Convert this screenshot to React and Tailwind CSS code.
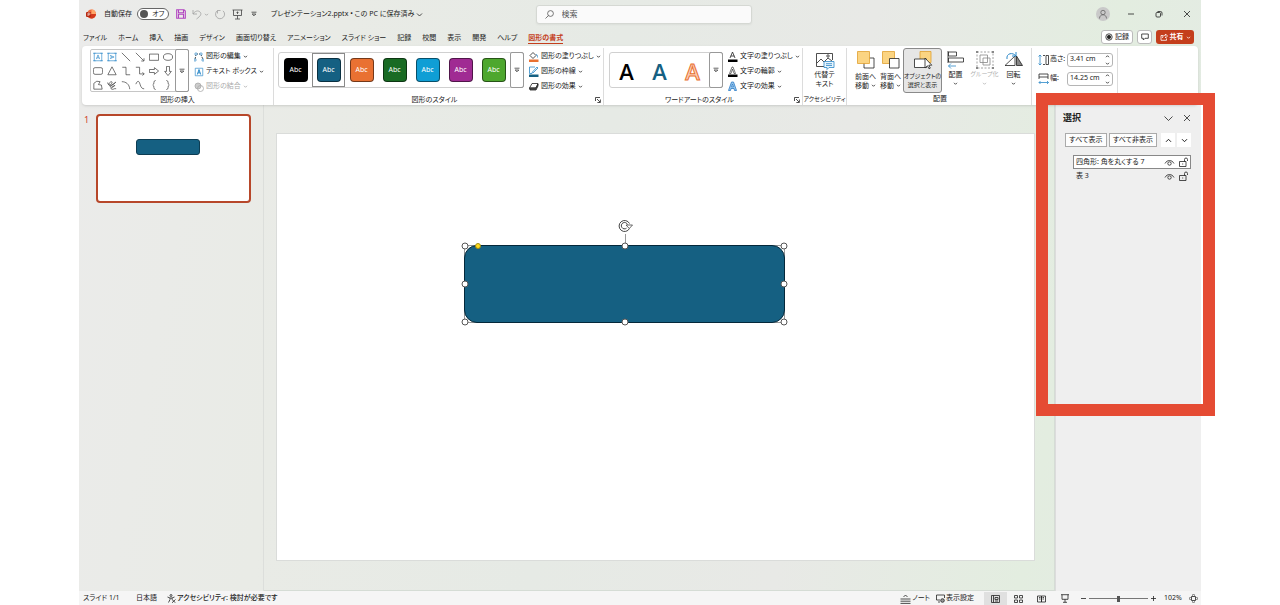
import { useState } from "react";

const tabs = [
  "ファイル", "ホーム", "挿入", "描画", "デザイン", "画面切り替え", "アニメーション",
  "スライド ショー", "記録", "校閲", "表示", "開発", "ヘルプ", "図形の書式",
];

const swatches = ["bg-black", "bg-[#156082]", "bg-[#e97132]", "bg-[#196b24]", "bg-[#0f9ed5]", "bg-[#a02b93]", "bg-[#4ea72e]"];

const handles = [
  "left-0 top-0", "left-1/2 top-0", "left-full top-0", "left-0 top-1/2",
  "left-full top-1/2", "left-0 top-full", "left-1/2 top-full", "left-full top-full",
];

function Svg({ w = 12, h = 12, box, className = "", children }) {
  return (
    <svg
      width={w}
      height={h}
      viewBox={box || `0 0 ${w} ${h}`}
      fill="none"
      stroke="currentColor"
      strokeWidth="0.8"
      className={`shrink-0 ${className}`}
      aria-hidden="true"
    >
      {children}
    </svg>
  );
}

function Chevron({ className = "" }) {
  return (
    <Svg w={5} h={5} className={className}>
      <path d="M1 1.8 2.5 3.3 4 1.8" />
    </Svg>
  );
}

function MoveChevron({ className = "" }) {
  return (
    <Svg w={7} h={7} className={className}>
      <path d="M1 2.2 3.5 4.7 6 2.2" strokeWidth="1" />
    </Svg>
  );
}

function MoreArrow() {
  return (
    <Svg w={6} h={6}>
      <path d="M.5 1.2h5M1.2 3 3 4.8 4.8 3z" strokeWidth=".7" />
    </Svg>
  );
}

function Launcher() {
  return (
    <button aria-label="詳細" className="absolute right-0.5 bottom-0.5">
      <Svg w={6} h={6}>
        <path d="M.5 4V.5H5M2 2l3 3M5.4 2.5v3h-3" />
      </Svg>
    </button>
  );
}

const blue = "#2b88c8";

const shapes = [
  { name: "テキスト ボックス", d: <g stroke={blue}><path d="M1.5 1.5h9v9h-9zM4 8.5 6 3.5l2 5M4.7 7h2.6" /><path d="M0 1.5h3M9 1.5h3M0 10.5h3M9 10.5h3" /></g> },
  { name: "縦書きテキスト ボックス", d: <g stroke={blue}><path d="M1.5 1.5h9v9h-9zM3.5 4l5 2-5 2M5 4.7v2.6" /><path d="M0 1.5h3M9 1.5h3M0 10.5h3M9 10.5h3" /></g> },
  { name: "線", d: <path d="M1 1l10 10" /> },
  { name: "線矢印", d: <path d="M1 1l9.5 9.5M10.8 7.5v3.3H7.5" /> },
  { name: "正方形/長方形", d: <path d="M.5 2.5h11V10H.5z" /> },
  { name: "楕円", d: <ellipse cx="6" cy="6" rx="5.5" ry="4" /> },
  { name: "四角形: 角を丸くする", d: <rect x=".5" y="2" width="11" height="8" rx="2" /> },
  { name: "二等辺三角形", d: <path d="M6 1l5 9.5H1z" /> },
  { name: "コネクタ: カギ線", d: <path d="M1.5 1.5H6v9h5" /> },
  { name: "コネクタ: カギ線矢印", d: <path d="M1 1.5h4.5v8H11M9 7.5l2 2-2 2" /> },
  { name: "矢印: 右", d: <path d="M.5 4.2h6V2l5 4-5 4V7.8h-6z" /> },
  { name: "矢印: 下", d: <path d="M4.2.5v6H2l4 5 4-5H7.8v-6z" /> },
  { name: "フリーフォーム: 図形", d: <path d="M1 11V4l3.5-2.500 4 .5-2 3.500 3.500.5 1 5z" /> },
  { name: "フリーフォーム: フリーハンド", d: <path d="M.8 3C1 7 5 6 6 3.5S3 2 2 5c0 3 5 2 8.5-2.500C8 5 3 7 4 8.5S9 6 9.5 6.5 3 10 5.500 11s3-1.500 5.500-.5" /> },
  { name: "円弧", d: <path d="M1 2c5 0 9 3 9.5 9" /> },
  { name: "曲線", d: <path d="M1 5C3 0 5 1 6 5s3 6 5 5.5" /> },
  { name: "左中かっこ", d: <path d="M8 .5C4.500.5 7 5.500 4.500 6 7 6.500 4.500 11.500 8 11.500" /> },
  { name: "右中かっこ", d: <path d="M4 .5C7.500.5 5 5.500 7.500 6 5 6.500 7.500 11.500 4 11.500" /> },
];

function MenuRow({ icon, label, disabled }) {
  return (
    <button disabled={disabled} className={`flex h-[15px] items-center gap-0.5 ${disabled ? "text-[#aaa]" : ""}`}>
      {icon}
      <span>{label}</span>
      <Chevron />
    </button>
  );
}

function Group({ label, className = "", labelClass = "", launcher, children }) {
  return (
    <section className={`relative flex shrink-0 flex-col border-r border-[#dcdcdc] ${className}`}>
      <div className="flex flex-1 items-start">{children}</div>
      <div className={`h-[13px] text-center leading-[12px] ${labelClass}`}>{label}</div>
      {launcher && <Launcher />}
    </section>
  );
}

function BigButton({ icon, lines, menu, disabled, active, small, className }) {
  return (
    <button
      disabled={disabled}
      className={`flex h-[45px] shrink-0 flex-col items-center rounded-[3px] border pt-px leading-[9px] ${className} ${
        active ? "border-[#8a8a8a] bg-[#e6e6e6]" : "border-transparent"
      } ${disabled ? "text-[#b0b0b0]" : ""} ${small ? "text-[6px]" : ""}`}
    >
      {icon}
      <span>{lines[0]}</span>
      <span className="flex min-h-[9px] items-center gap-0.5">
        {lines[1]}
        {menu && <Chevron />}
      </span>
    </button>
  );
}

function SizeField({ id, label, icon, value, onChange }) {
  return (
    <div className="flex h-[19px] items-center">
      {icon}
      <label htmlFor={id} className="w-[17px]">{label}</label>
      <div className="flex h-[14px] w-[46px] items-center rounded-[3px] border border-[#b5b5b5] bg-white pr-0.5">
        <input id={id} value={value} onChange={(e) => onChange(e.target.value)} className="w-0 flex-1 pl-0.5 outline-none" />
        <div className="flex flex-col gap-0.5">
          <button aria-label={`${label} 増やす`}><Chevron className="rotate-180" /></button>
          <button aria-label={`${label} 減らす`}><Chevron /></button>
        </div>
      </div>
    </div>
  );
}

function TitleBar() {
  const [autoSave, setAutoSave] = useState(false);
  return (
    <header className="flex h-[28px] items-center pl-[7px]">
      <div className="flex flex-1 items-center text-[7px] whitespace-nowrap">
        <Svg w={10} h={10} className="mr-2">
          <circle cx="5.5" cy="5" r="4.5" fill="#f0693a" stroke="none" />
          <path d="M5.5.5A4.5 4.5 0 0 1 10 5H5.5z" fill="#ffa668" stroke="none" />
          <path d="M1 5h9a4.5 4.5 0 0 1-8 2.7z" fill="#d3381c" stroke="none" />
          <rect y="3" width="5" height="5" rx="1" fill="#b7280f" stroke="none" />
          <path d="M2 7V4h1.2a.9.9 0 0 1 0 1.800H2" stroke="#fff" strokeWidth=".6" />
        </Svg>
        <span className="w-[33px]">自動保存</span>
        <button
          role="switch"
          aria-checked={autoSave}
          aria-label="自動保存"
          onClick={() => setAutoSave(!autoSave)}
          className="mr-[7px] flex h-[12px] w-[32px] items-center gap-1 rounded-full border border-[#666] bg-white pl-0.5"
        >
          <span className="size-2 rounded-full bg-[#555]" />
          {autoSave ? "オン" : "オフ"}
        </button>
        <button aria-label="保存" className="mr-1.5">
          <Svg w={10} h={10} className="text-[#b144c0]">
            <path d="M.7.7H8L9.3 2v7.3H.7zM2.5.7v3h5v-3M2.5 9.300v-4h5v4" strokeWidth="1.1" />
          </Svg>
        </button>
        <button aria-label="元に戻す" className="flex items-center gap-0.5 text-[#a0a0a0]">
          <Svg w={10} h={11}><path d="M1 1v4h4M1 5c2-3 5-4 7-2s.5 4-3.5 7" /></Svg>
          <Chevron />
        </button>
        <button aria-label="やり直し" className="mx-1.5 text-[#a0a0a0]">
          <Svg w={11} h={11}><path d="M2.5 1.5A4.5 4.5 0 1 0 8 1.8M5.5 1.500h-3v3" /></Svg>
        </button>
        <button aria-label="最初から開始" className="mr-2 text-[#444]">
          <Svg w={11} h={11}><path d="M.5 1h10M1.500 1v5.500h8V1M5.500 6.500V10M3 10h5M5.500 2.500V5M4.500 3.500h2" /></Svg>
        </button>
        <button aria-label="クイック アクセス" className="mr-3.5"><MoreArrow /></button>
        <button className="flex items-center gap-0.5">
          プレゼンテーション2.pptx • この PC に保存済み
          <Svg w={7} h={7}><path d="M1 2.5 3.5 5 6 2.5" /></Svg>
        </button>
      </div>
      <label className="flex h-[19px] w-[216px] items-center gap-2 rounded-[3px] border border-[#d5d8d3] bg-[#fafafa] px-2 shadow-xs">
        <Svg w={9} h={9} className="text-[#555]"><circle cx="5.5" cy="3.5" r="2.9" /><path d="M3.5 5.5.5 8.5" /></Svg>
        <input type="search" aria-label="検索" placeholder="検索" className="w-0 flex-1 text-[8px] outline-none placeholder:text-[#555]" />
      </label>
      <div className="flex flex-1 items-center justify-end">
        <button aria-label="アカウント" className="mr-[17px] flex size-[14px] items-center justify-center rounded-full bg-[#c9c9c9] text-[#666]">
          <Svg w={10} h={10}><circle cx="5" cy="3.5" r="2.2" /><path d="M1.5 9.5c0-5 7-5 7 0" /></Svg>
        </button>
        <button aria-label="最小化" className="mr-5"><Svg w={8} h={8}><path d="M1 4h6" /></Svg></button>
        <button aria-label="元に戻す (縮小)" className="mr-5">
          <Svg w={8} h={8}><rect x="1" y="2.5" width="4.5" height="4.5" rx="1" /><path d="M2.5 1.500h3A1.500 1.500 0 0 1 7 3v2.500" /></Svg>
        </button>
        <button aria-label="閉じる" className="mr-2.5"><Svg w={8} h={8}><path d="M1 1l6 6M7 1 1 7" /></Svg></button>
      </div>
    </header>
  );
}

function TabBar() {
  const [current, setCurrent] = useState("図形の書式");
  return (
    <div className="flex h-[18px] items-center justify-between pr-[7px] pl-1">
      <nav className="flex items-center gap-[11px] pt-0.5 text-[7px] whitespace-nowrap">
        {tabs.map((tab) => (
          <button
            key={tab}
            onClick={() => setCurrent(tab)}
            className={`border-b leading-[11px] ${
              tab === current ? "border-[#c43e1c] font-bold text-[#c43e1c]" : "border-transparent"
            }`}
          >
            {tab}
          </button>
        ))}
      </nav>
      <div className="flex items-center gap-1 text-[7px]">
        <button className="flex h-[14px] w-[32px] items-center justify-center gap-0.5 rounded-[3px] border border-[#bbb] bg-white">
          <Svg w={8} h={8}><circle cx="4" cy="4" r="3.2" /><circle cx="4" cy="4" r="1.7" fill="currentColor" /></Svg>
          記録
        </button>
        <button aria-label="コメント" className="flex h-[14px] w-[15px] items-center justify-center rounded-[3px] border border-[#bbb] bg-white">
          <Svg w={8} h={8}><path d="M.7 1h6.6v4.3H4L2.3 7V5.300H.7z" /></Svg>
        </button>
        <button className="flex h-[14px] w-[38px] items-center justify-center gap-0.5 rounded-[3px] bg-[#c43e1c] font-bold text-white">
          <Svg w={8} h={8}><path d="M3 2.500H1v4.800h5.500V5.500M2.500 5c0-2 1-2.700 3-2.700V1l2 2-2 2V3.700" /></Svg>
          共有
          <Chevron />
        </button>
      </div>
    </div>
  );
}

function Ribbon() {
  const [style, setStyle] = useState(1);
  const [height, setHeight] = useState("3.41 cm");
  const [width, setWidth] = useState("14.25 cm");

  return (
    <div className="relative mx-[3px] flex h-[59px] rounded-[4px] bg-white pt-0.5 text-[7px] whitespace-nowrap shadow-sm">
      <Group label="図形の挿入" labelClass="pr-2" className="w-[192px] pl-2">
        <div className="mt-px flex h-[43px] rounded-[2px] border border-[#c6c6c6]">
          <div className="grid grid-cols-6 items-center text-[#333]">
            {shapes.map((s) => (
              <button key={s.name} aria-label={s.name} className="flex h-[14px] w-[14px] items-center justify-center">
                <Svg w={10} h={10} box="0 0 12 12">{s.d}</Svg>
              </button>
            ))}
          </div>
          <button aria-label="図形一覧" className="-my-px -mr-px flex w-[14px] items-center justify-center rounded-[2px] border border-[#999]">
            <MoreArrow />
          </button>
        </div>
        <div className="mt-px ml-[5px]">
          <MenuRow
            label="図形の編集"
            icon={<Svg w={10} h={10}><path d="M2 2h5M2 2 1 8M7 2l2 6" strokeDasharray="2 1" /><path d="M1 1h2v2H1zM6 1h2v2H6zM0 7h2v2H0zM8 7h2v2H8z" stroke={blue} fill="#fff" strokeWidth=".6" /></Svg>}
          />
          <MenuRow
            label="テキスト ボックス"
            icon={<Svg w={10} h={10} box="0 0 12 12"><path d="M1.5 1.5h9v9h-9z" stroke={blue} /><path d="M4 9 6 3l2 6M4.7 7h2.6" stroke={blue} strokeWidth="1.2" /></Svg>}
          />
          <MenuRow
            label="図形の結合"
            disabled
            icon={<Svg w={10} h={10}><circle cx="4" cy="4" r="3" fill="#ccc" /><circle cx="6.5" cy="6.5" r="3" /></Svg>}
          />
        </div>
      </Group>

      <Group label="図形のスタイル" labelClass="pr-3" launcher className="w-[330px] pl-1">
        <div className="mt-1 flex h-[36px] items-center rounded-[3px] border border-[#d0d0d0]">
          <div className="flex">
            {swatches.map((color, i) => (
              <button
                key={color}
                onClick={() => setStyle(i)}
                className={`flex h-[34px] w-[33px] items-center justify-center border ${style === i ? "border-[#8a8a8a]" : "border-transparent"}`}
              >
                <span className={`flex size-6 items-center justify-center rounded-[4px] border border-black/50 text-white ${color}`}>Abc</span>
              </button>
            ))}
          </div>
          <button aria-label="スタイル一覧" className="-mr-px flex h-[36px] w-[14px] items-center justify-center rounded-[2px] border border-[#999]">
            <MoreArrow />
          </button>
        </div>
        <div className="mt-px ml-1">
          <MenuRow
            label="図形の塗りつぶし"
            icon={<Svg w={11} h={11}><path d="M2 4.5 5 1.5l3 3-3 3z" /><path d="M8 3.5c1.5 0 1.5 1.5 1.5 3" stroke={blue} /><path d="M1 8.500h9.500V11H1z" fill="#e97132" stroke="none" /></Svg>}
          />
          <MenuRow
            label="図形の枠線"
            icon={<Svg w={11} h={11}><path d="M7 1H1.500v6.500H4" stroke={blue} /><path d="M4 6.500 9 1l1 1-5 5z" stroke={blue} /><path d="M1 8.500h9.500V11H1z" fill="#156082" stroke="none" /></Svg>}
          />
          <MenuRow
            label="図形の効果"
            icon={<Svg w={11} h={11}><path d="M1.500 7 4 2.500h6L8 7z" fill="#fff" /><path d="M1.500 7H8l2-4v2L8 9H2z" fill="#555" /></Svg>}
          />
        </div>
      </Group>

      <Group label="ワードアートのスタイル" labelClass="pr-3" launcher className="w-[199px] pl-[5px]">
        <div className="mt-1 flex h-[36px] items-center rounded-[3px] border border-[#d0d0d0] font-['Open_Sans',sans-serif] text-[22px] font-semibold">
          <button className="h-[34px] w-[33px] leading-[36px] text-black">A</button>
          <button className="h-[34px] w-[33px] leading-[36px] text-[#156082]">A</button>
          <button className="h-[34px] w-[33px] leading-[36px] text-[#fbd0b8] [-webkit-text-stroke:1px_#e97132]">A</button>
          <button aria-label="ワードアート一覧" className="-mr-px flex h-[36px] w-[14px] items-center justify-center rounded-[2px] border border-[#999]">
            <MoreArrow />
          </button>
        </div>
        <div className="mt-px ml-1">
          <MenuRow
            label="文字の塗りつぶし"
            icon={<Svg w={11} h={11}><path d="M3 7 5.500 1 8 7M3.800 5h3.400" /><path d="M1 8.500h9.500V11H1z" fill="#000" stroke="none" /></Svg>}
          />
          <MenuRow
            label="文字の輪郭"
            icon={<Svg w={11} h={11}><path d="M2.500 7.500 5 1h1l2.500 6.500H7L5.500 3 4 7.500z" strokeWidth=".6" /><path d="M1 8.500h9.500V11H1z" fill="#000" stroke="none" /></Svg>}
          />
          <MenuRow
            label="文字の効果"
            icon={<Svg w={11} h={11} className="text-[#2b7cc8]"><path d="M1.500 9.500 4.500 1h2l3 8.500h-2L7 7.500H4l-.5 2z" fill="#9cc8ec" /><path d="M4.500 5.800h2l-1-2.800z" fill="#fff" /></Svg>}
          />
        </div>
      </Group>

      <Group label="アクセシビリティ" labelClass="text-[6px]" className="w-[44px]">
        <BigButton
          className="w-full"
          lines={["代替テ", "キスト"]}
          icon={<Svg w={20} h={20}><path d="M11 16.500H1.500v-13h16V10M2 13l4-4 3 3 4-4 4 3" /><circle cx="13" cy="6" r="1.200" /><path d="M9 11.500h10v6h-5l-2 2v-2H9zM11 13.700h6M11 15.500h6" stroke={blue} fill="#e8f4fc" /></Svg>}
        />
      </Group>

      <Group label="配置" labelClass="pr-1" className="w-[185px] pl-1.5">
        <BigButton
          className="w-[25px]"
          lines={["前面へ", "移動"]}
          menu
          icon={<Svg w={20} h={20} className="mb-0.5"><path d="M8 8h10v10H8z" /><path d="M1.500 1.500h12v12h-12z" fill="#fbd482" stroke="#e0a030" /></Svg>}
        />
        <BigButton
          className="w-[25px]"
          lines={["背面へ", "移動"]}
          menu
          icon={<Svg w={20} h={20} className="mb-0.5"><path d="M1.500 1.500h12v12h-12z" fill="#fbd482" stroke="#e0a030" /><path d="M8.500 8.500H18V18H8.500z" fill="#fff" /></Svg>}
        />
        <BigButton
          className="w-[39px]"
          active
          small
          lines={["オブジェクトの", "選択と表示"]}
          icon={<Svg w={20} h={20} className="mb-0.5"><path d="M7 1.500h11v11H7z" fill="#fbd482" stroke="#e0a030" /><path d="M1.500 9h12v8.500h-12z" fill="#fff" /><path d="M12 8v10l2.500-2.200 1.500 3 1.300-.7-1.500-2.900h3z" fill="#fff" /></Svg>}
        />
        <BigButton
          className="w-[27px]"
          lines={["配置", ""]}
          menu
          icon={<Svg w={20} h={20}><path d="M2 1v12M2.500 2h8v4h-8zM2.500 8h15v4h-15z" /><path d="M10 16H2.500M5 13.500 2.500 16 5 18.500" stroke={blue} /></Svg>}
        />
        <BigButton
          className="w-[31px]"
          disabled
          small
          lines={["グループ化", ""]}
          menu
          icon={<Svg w={20} h={20} className="text-[#888]"><path d="M5 5h7.500v7.500H5zM8 8h7v7H8z" /><path d="M2 2h16v16H2z" strokeDasharray="2 1.5" /><path d="M1 1h2v2H1zM17 1h2v2h-2zM1 17h2v2H1zM17 17h2v2h-2z" fill="#888" stroke="none" /></Svg>}
        />
        <BigButton
          className="w-[27px]"
          lines={["回転", ""]}
          menu
          icon={<Svg w={20} h={20}><path d="M1 15.500h10V6z" /><path d="M12.500 15.500V6l6 9.500z" fill="#888" /><path d="M3 9c-1-6 6-7 9-3M12 2v4H8" stroke={blue} strokeWidth="1" /></Svg>}
        />
      </Group>

      <Group label="サイズ" className="w-[86px] pl-1.5">
        <div className="mt-0.5">
          <SizeField
            id="shape-height"
            label="高さ:"
            value={height}
            onChange={setHeight}
            icon={<Svg w={12} h={12}><path d="M2 1v10M.5 2.5 2 1l1.500 1.500M.5 9.500 2 11l1.500-1.500" stroke={blue} /><path d="M5 1.500h2M5 10.500h2M8 1.500h2.500v9H8z" /></Svg>}
          />
          <SizeField
            id="shape-width"
            label="幅:"
            value={width}
            onChange={setWidth}
            icon={<Svg w={12} h={12}><path d="M1 9.500h9.500M2.500 8 1 9.500 2.500 11M9 8l1.500 1.500L9 11" stroke={blue} /><path d="M1 6V1h9v5M1 4h9" /></Svg>}
          />
        </div>
      </Group>
    </div>
  );
}

function Thumbnails() {
  return (
    <aside className="flex w-[185px] shrink-0 items-start gap-2 border-r border-[#dcdedb] pt-[9px] pl-[5px]">
      <span className="w-1 text-[9px] leading-[11px] text-[#d0452a]">1</span>
      <button aria-label="スライド 1" className="relative h-[89px] w-[155px] rounded-[4px] border-2 border-[#b7472a] bg-white">
        <span className="absolute top-[23px] left-[38px] h-[16px] w-[64px] rounded-[3px] border border-[#0d3c52] bg-[#156082]" />
      </button>
    </aside>
  );
}

function Slide() {
  return (
    <main className="flex min-w-0 flex-1 border-r border-b border-[#d5dcd5] pt-[28px] pr-[19px] pb-[29px] pl-[12px]">
      <div className="relative flex-1 border border-[#dadcda] bg-white">
        <div className="absolute top-[111px] left-[187px] h-[78px] w-[321px] border border-[#999]">
          <div className="absolute -inset-px rounded-[13px] border border-[#04283a] bg-[#156082]" />
          <div className="absolute -top-3 left-1/2 h-3 w-px bg-[#999]" />
          {handles.map((pos) => (
            <span key={pos} className={`absolute size-[7px] -translate-1/2 rounded-full border border-[#555] bg-white ${pos}`} />
          ))}
          <span className="absolute top-0 left-[13px] size-[6px] -translate-1/2 rounded-full border border-[#a08a10] bg-[#ffdc1e]" />
          <Svg w={16} h={14} className="absolute -top-[27px] left-1/2 -translate-x-[7px] text-[#444]">
            <path d="M11.5 9.5A5.5 5.5 0 1 1 11.5 4.5M8.5 9.2A3.2 3.2 0 1 1 9.5 5.5" strokeWidth="1" />
            <path d="M8 6h6.5l-3.2 3.5z" fill="#fff" />
          </Svg>
        </div>
      </div>
    </main>
  );
}

function SelectionRow({ name, selected }) {
  return (
    <li className={`flex h-[14px] items-center border px-0.5 ${selected ? "border-[#888] bg-white" : "border-transparent"}`}>
      <span className="flex-1">{name}</span>
      <button aria-label={`${name} 表示`} className="mr-1">
        <Svg w={11} h={9}><path d="M1 5.5c2-4 7-4 9 0" /><circle cx="5.5" cy="5.5" r="1.7" /></Svg>
      </button>
      <button aria-label={`${name} ロック`}>
        <Svg w={9} h={10}><path d="M.5 4.5H7v5H.5zM5.5 4.5v-2a1.5 1.5 0 0 1 3 0V4M3.7 6.500v1" /></Svg>
      </button>
    </li>
  );
}

function SelectionPane() {
  return (
    <aside className="w-[146px] shrink-0 border-l border-[#dcdcdc] bg-[#efefef] pt-[6px] pr-[10px] pl-[7px] text-[7px] whitespace-nowrap">
      <div className="flex h-[14px] items-center">
        <h2 className="flex-1 text-[9px] font-bold">選択</h2>
        <button aria-label="作業ウィンドウのオプション" className="mr-2.5"><Svg w={9} h={9}><path d="M.5 2.5l4 4 4-4" /></Svg></button>
        <button aria-label="閉じる"><Svg w={8} h={8}><path d="M1 1l6 6M7 1 1 7" /></Svg></button>
      </div>
      <div className="mt-2 flex h-[14px] gap-0.5 pl-0.5">
        <button className="w-[42px] border border-[#aaa] bg-[#fdfdfd]">すべて表示</button>
        <button className="w-[49px] border border-[#aaa] bg-[#fdfdfd]">すべて非表示</button>
        <button aria-label="前面へ移動" className="ml-0.5 flex w-[14px] items-center justify-center bg-white"><MoveChevron className="rotate-180" /></button>
        <button aria-label="背面へ移動" className="flex w-[14px] items-center justify-center bg-white"><MoveChevron /></button>
      </div>
      <ul className="mt-2 ml-2.5">
        <SelectionRow name="四角形: 角を丸くする 7" selected />
        <SelectionRow name="表 3" />
      </ul>
    </aside>
  );
}

function StatusBar() {
  const [zoom, setZoom] = useState(50);
  return (
    <footer className="flex h-[14px] items-center bg-[#f5f5f5] pt-px pr-[3px] pl-1 text-[7px] whitespace-nowrap">
      <span className="w-[53px]">スライド 1/1</span>
      <button className="mr-2.5">日本語</button>
      <button className="flex items-center gap-px font-medium">
        <Svg w={9} h={9}><circle cx="4" cy="1.5" r="1" /><path d="M.5 3 3 4v1.5l-1.5 3M7.500 3 5 4v1.500M3 4h2M5 5.500l3.500 3.300M8.500 5.500 5 8.800" /></Svg>
        アクセシビリティ: 検討が必要です
      </button>
      <div className="flex-1" />
      <button className="mr-1.5 flex items-center gap-px">
        <Svg w={11} h={10}><path d="M.5 5h10M.5 7.200h10M.5 9.400h10M3.500 3 5.500 1l2 2" /></Svg>
        ノート
      </button>
      <button className="mr-2.5 flex items-center gap-px">
        <Svg w={9} h={9}><path d="M4 6H.5V1h8v3M2 8h2" /><circle cx="6.5" cy="6.5" r="1.8" fill="#999" /></Svg>
        表示設定
      </button>
      <button aria-label="標準" className="flex h-[13px] w-[23px] items-center justify-center bg-[#e0e0e0]">
        <Svg w={9} h={8}><path d="M.5.5h8v7h-8zM2.500.5v7M4 2.500h3v2H4zM4 6h3" /></Svg>
      </button>
      <button aria-label="スライド一覧" className="flex w-[23px] justify-center">
        <Svg w={9} h={8}><path d="M.5.5h3V3h-3zM5.500.5h3V3h-3zM.5 5h3v2.500h-3zM5.500 5h3v2.500h-3z" /></Svg>
      </button>
      <button aria-label="閲覧表示" className="flex w-[23px] justify-center">
        <Svg w={9} h={8}><path d="M.5 1h4v6h-4zM4.500 1h4v6h-4zM2 2.500h1.500M2 4h1.500M5.500 2.500H7M5.500 4H7" /></Svg>
      </button>
      <button aria-label="スライド ショー" className="mr-1 flex w-[23px] justify-center">
        <Svg w={8} h={9}><path d="M0 .7h8M1 .7v4.600h6V.7M4 5.300v3M2 8.300h4" /></Svg>
      </button>
      <button aria-label="縮小"><Svg w={7} h={7}><path d="M1 3.500h5" /></Svg></button>
      <input
        type="range"
        aria-label="ズーム"
        value={zoom}
        onChange={(e) => setZoom(e.target.value)}
        className="mx-0.5 h-px w-[59px] appearance-none bg-[#777] [&::-webkit-slider-thumb]:h-[6px] [&::-webkit-slider-thumb]:w-[3px] [&::-webkit-slider-thumb]:appearance-none [&::-webkit-slider-thumb]:bg-[#555]"
      />
      <button aria-label="拡大"><Svg w={7} h={7}><path d="M1 3.500h5M3.500 1v5" /></Svg></button>
      <span className="w-[32px] text-center">102%</span>
      <button aria-label="ウィンドウに合わせる">
        <Svg w={9} h={9}><path d="M2.500 2.500h4v4h-4zM3 1.500 4.500.2 6 1.500M3 7.500l1.500 1.300L6 7.500M1.500 3 .2 4.500 1.500 6M7.500 3l1.300 1.500L7.500 6" /></Svg>
      </button>
    </footer>
  );
}

export default function App() {
  return (
    <div className="relative min-h-screen bg-white px-[79px] font-['Noto_Sans','Noto_Sans_CJK_JP',sans-serif] text-[#222] [font-feature-settings:'palt']">
      <div className="flex min-h-screen flex-col bg-[linear-gradient(100deg,#ebebea_0%,#e9ebe6_22%,#e6eae5_45%,#e8e9e6_65%,#e3ede0_85%,#e4eae5_100%)]">
        <TitleBar />
        <TabBar />
        <Ribbon />
        <div className="flex flex-1">
          <Thumbnails />
          <Slide />
          <SelectionPane />
        </div>
        <StatusBar />
      </div>
      <div className="pointer-events-none absolute top-[93px] right-[65px] h-[323px] w-[179px] border-[12px] border-[#e54b33]" />
    </div>
  );
}
